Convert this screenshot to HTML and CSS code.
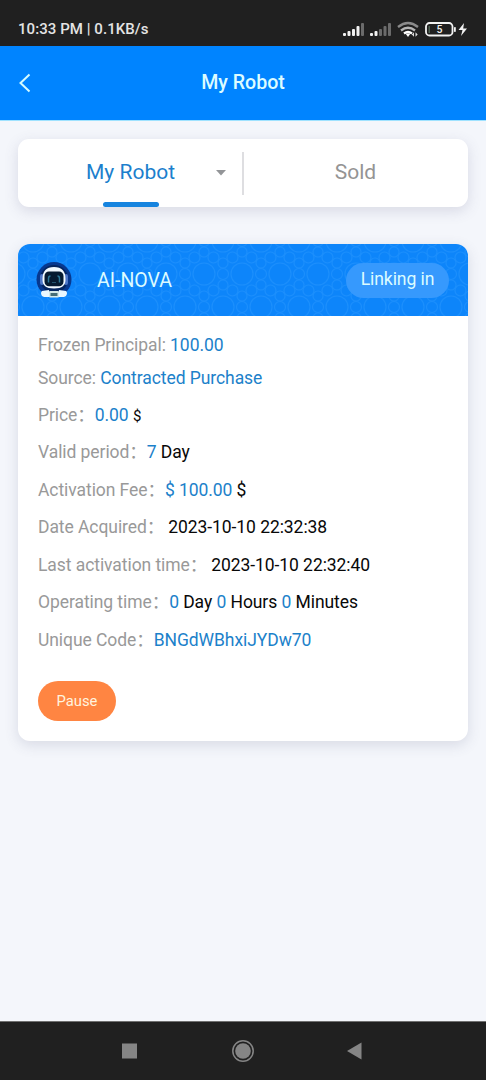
FILE: index.html
```html
<!DOCTYPE html>
<html lang="en">
<head>
<meta charset="utf-8">
<title>My Robot</title>
<link rel="stylesheet" href="styles.css">
</head>
<body>
<div class="screen">
  <div class="status">
    <span class="clock">10:33 PM | 0.1KB/s</span>
    <svg class="status-icons" width="128" height="20" viewBox="0 0 128 20">
      <g fill="#f2f2f2">
        <rect x="1" y="13" width="3" height="3" rx="1"/><rect x="5.500" y="11" width="3" height="5" rx="1"/><rect x="10" y="9" width="3" height="7" rx="1"/><rect x="14.500" y="6" width="3" height="10" rx="1"/>
        <rect x="28" y="13" width="3" height="3" rx="1"/><rect x="32.500" y="11" width="3" height="5" rx="1"/>
      </g>
      <g fill="#6b6b6b">
        <rect x="19" y="3" width="3" height="13" rx="1"/>
        <rect x="37" y="9" width="3" height="7" rx="1"/><rect x="41.500" y="6" width="3" height="10" rx="1"/><rect x="46" y="3" width="3" height="13" rx="1"/>
      </g>
      <g fill="none" stroke-width="2.300">
        <path d="M56 7Q66 -1 76 7" stroke="#8b8b8b"/>
        <path d="M59 10.500Q66 5 73 10.500" stroke="#b5b5b5"/>
        <path d="M62 13.500Q66 10.500 70 13.500" stroke="#fff"/>
      </g>
      <path d="M63.500 13.500L66 17L68.500 13.500Z" fill="#fff"/>
      <path d="M72 12.300l-2.200 2.200 2.200 2.200zM73.500 12.300l2.200 2.200-2.200 2.200z" fill="#ddd"/>
      <rect x="84" y="3" width="26.500" height="12.500" rx="3.500" fill="none" stroke="#f2f2f2" stroke-width="1.800"/>
      <rect x="86.500" y="6" width="1.500" height="7" fill="#4e6152"/>
      <rect x="112" y="7" width="1.800" height="5" rx=".8" fill="#f2f2f2"/>
      <text x="97.500" y="13" class="battery-level">5</text>
      <path d="M122 3L116.500 10H120.500L119 16L125 8.500H121.200Z" fill="#f2f2f2"/>
    </svg>
  </div>
  <header class="header">
    <svg class="back" width="14" height="20" viewBox="0 0 14 20"><path d="M11.500 1.500L2.500 10L11.500 18.500" fill="none" stroke="#d4fbff" stroke-width="2"/></svg>
    <h1 class="title">My Robot</h1>
  </header>
  <main class="content">
    <nav class="tabs">
      <div class="tab tab-active">
        <span class="tab-text">My Robot</span>
        <svg class="caret" width="10" height="6" viewBox="0 0 10 6"><path d="M0 0H10L5 5.500Z" fill="#939598"/></svg>
      </div>
      <div class="tab tab-sold"><span class="tab-text">Sold</span></div>
    </nav>
    <section class="card">
      <div class="card-head">
        <svg class="pattern" width="450" height="72">
          <defs>
            <pattern id="rings" x="-4" y="-3" width="38" height="66" patternUnits="userSpaceOnUse">
              <g fill="none" stroke="#2f9cff" stroke-width="1.100" opacity=".42">
                <circle cx="19" cy="0" r="11"/><circle cx="19" cy="66" r="11"/>
                <circle cx="0" cy="33" r="11"/><circle cx="38" cy="33" r="11"/>
                <circle cx="0" cy="11" r="5"/><circle cx="38" cy="11" r="5"/>
                <circle cx="0" cy="55" r="5"/><circle cx="38" cy="55" r="5"/>
                <circle cx="19" cy="22" r="5"/><circle cx="19" cy="44" r="5"/>
                <circle cx="9.500" cy="16.500" r="5.500"/><circle cx="28.500" cy="16.500" r="5.500"/>
                <circle cx="9.500" cy="49.500" r="5.500"/><circle cx="28.500" cy="49.500" r="5.500"/>
                <circle cx="0" cy="0" r="5.500"/><circle cx="38" cy="0" r="5.500"/>
                <circle cx="0" cy="66" r="5.500"/><circle cx="38" cy="66" r="5.500"/>
                <circle cx="19" cy="33" r="5.500"/>
              </g>
            </pattern>
          </defs>
          <rect width="450" height="72" fill="url(#rings)"/>
        </svg>
        <svg class="avatar" width="36" height="36" viewBox="0 0 36 36">
          <circle cx="18" cy="17.500" r="17.500" fill="#07388f"/>
          <circle cx="18" cy="17" r="14" fill="#052660"/>
          <rect x="4" y="12" width="4" height="11" rx="2" fill="#4d77c8"/><rect x="28" y="12" width="4" height="11" rx="2" fill="#4d77c8"/>
          <path d="M6 34Q4 31 6 29L13 28L14 35H8ZM30 34Q32 31 30 29L23 28L22 35H28Z" fill="#e9f7ff"/>
          <rect x="13" y="29" width="10" height="6.500" rx="1" fill="#d5e9e8"/>
          <rect x="14.500" y="31" width="7" height="3" fill="#456d75"/>
          <path d="M6.500 17Q6.500 5 18 5Q29.500 5 29.500 17Q30 26.500 18 26.500Q6 26.500 6.500 17Z" fill="#f2faff"/>
          <rect x="8.500" y="9.500" width="19" height="14.800" rx="4.500" fill="#061b31"/>
          <path d="M12.500 20.500V16.500Q12.500 14 14.500 14M23.500 20.500V16.500Q23.500 14 21.500 14" fill="none" stroke="#2d7898" stroke-width="1.500"/>
          <path d="M16 20.500H20" stroke="#24536d"/>
        </svg>
        <span class="name">AI-NOVA</span>
        <span class="state">Linking in</span>
      </div>
      <div class="details">
        <div class="row tight">Frozen Principal: <b>100.00</b></div>
        <div class="row tight last-tight">Source: <b>Contracted Purchase</b></div>
        <div class="row">Price<i>：</i><b>0.00</b> <em class="small">$</em></div>
        <div class="row">Valid period<i>：</i><b>7</b> <em>Day</em></div>
        <div class="row">Activation Fee<i>：</i><b>$ 100.00</b> <em>$</em></div>
        <div class="row">Date Acquired<i>：</i><em class="date">2023-10-10 22:32:38</em></div>
        <div class="row">Last activation time<i>：</i><em class="date">2023-10-10 22:32:40</em></div>
        <div class="row">Operating time<i>：</i><b>0</b> <em>Day</em> <b>0</b> <em>Hours</em> <b>0</b> <em>Minutes</em></div>
        <div class="row">Unique Code<i>：</i><b>BNGdWBhxiJYDw70</b></div>
      </div>
      <button class="pause">Pause</button>
    </section>
  </main>
  <footer class="navbar">
    <svg width="16" height="16"><rect width="15" height="15" x="0" y=".5" fill="#858585"/></svg>
    <svg width="24" height="24"><circle cx="12" cy="12" r="10.200" fill="none" stroke="#858585" stroke-width="1.500"/><circle cx="12" cy="12" r="7.800" fill="#858585"/></svg>
    <svg width="16" height="18"><path d="M0 9L14.500 .5V17.500Z" fill="#858585"/></svg>
  </footer>
</div>
</body>
</html>
```
FILE: styles.css
```css
* { box-sizing: border-box; }
body { margin: 0; font-family: Roboto, "Noto Sans CJK SC", sans-serif; }
.screen { width: 486px; height: 1080px; display: flex; flex-direction: column; background: #f4f6fb; overflow: hidden; }
.status { height: 46px; flex: none; background: #202020; display: flex; justify-content: space-between; padding: 20px 16px 0 18px; }
.clock { font-size: 15px; line-height: 19px; font-weight: 500; color: #e4e4e4; letter-spacing: .06px; }
.battery-level { font: 500 10.5px Roboto, sans-serif; fill: #eee; text-anchor: middle; }
.header { height: 75px; flex: none; background: #0084ff; display: grid; grid-template-columns: 44px 1fr 44px; align-items: center; border-bottom: 1px solid #9fe2ff; }
.back { margin-left: 18px; }
.title { margin: 0; text-align: center; font-size: 19.6px; font-weight: 500; line-height: 24px; color: #dcfcff; }
.content { flex: 1; padding: 18px 18px 0; }
.tabs { height: 68px; display: grid; grid-template-columns: 225px 1fr; background: #fff; border-radius: 11px; box-shadow: 0 4px 14px rgba(80, 75, 120, .17); }
.tab { position: relative; display: flex; align-items: center; font-size: 21px; line-height: 26px; }
.tab-text { padding-bottom: 2px; }
.tab-active { color: #1c7fcd; padding-left: 68px; }
.tab-active::before { content: ""; position: absolute; right: -1px; top: 13px; width: 2px; height: 43px; background: #dedee1; }
.tab-active::after { content: ""; position: absolute; left: 85px; bottom: 0; width: 56px; height: 5px; border-radius: 3px; background: #1684df; }
.caret { margin-left: auto; margin-right: 17px; }
.tab-sold { justify-content: center; color: #949494; }
.card { margin-top: 37px; height: 497px; background: #fff; border-radius: 12px; overflow: hidden; box-shadow: 0 4px 14px rgba(70, 75, 110, .16); }
.card-head { position: relative; height: 72px; background: #0d85fa; display: flex; align-items: center; padding: 0 19px 0 18px; }
.pattern { position: absolute; left: 0; top: 0; }
.avatar, .name, .state { position: relative; }
.name { margin-left: 25px; font-size: 19.5px; color: #dcfbff; }
.state { margin-left: auto; width: 103px; height: 35px; border-radius: 18px; background: #3699fd; color: #dcfcff; font-size: 17.6px; letter-spacing: -.1px; line-height: 33px; text-align: center; white-space: nowrap; }
.details { padding: 13px 20px 0; }
.row { height: 37.5px; line-height: 37.5px; font-size: 17.5px; letter-spacing: -.07px; color: #999; white-space: pre; }
.tight { height: 33px; line-height: 33px; }
.last-tight { margin-bottom: 1.5px; }
.row b { font-weight: 400; color: #1c81ca; }
.row i { font-style: normal; }
.row em { font-style: normal; color: #080808; }
.row .small { font-size: 15px; }
.row .date { margin-left: 4px; }
.pause { display: block; margin: 21.5px 0 0 20px; padding: 0; width: 78px; height: 40px; border: 0; border-radius: 20px; background: #ff8542; color: #fff3df; font: 14.8px Roboto, sans-serif; }
.navbar { height: 59px; flex: none; background: #202020; border-top: 1px solid #707070; display: flex; justify-content: space-between; align-items: center; padding: 0 123px 0 122px; }
```
